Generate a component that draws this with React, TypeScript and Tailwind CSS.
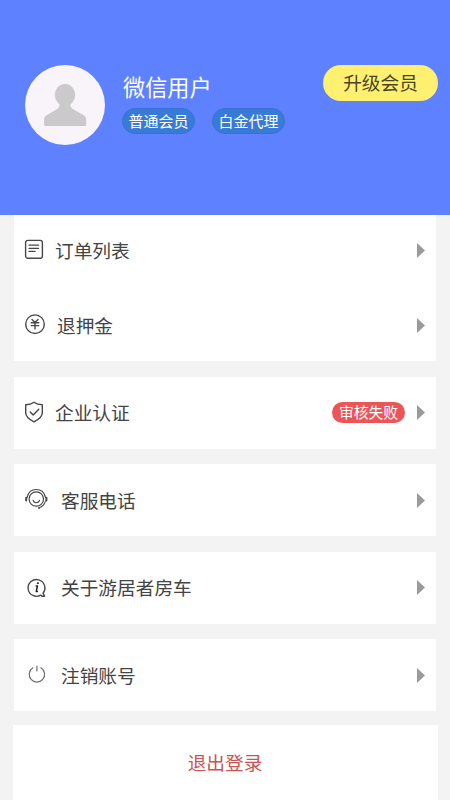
import type { ReactNode } from "react";

type MenuItem = {
  label: string;
  icon: ReactNode;
  iconWidth: string;
  badge?: string;
};

// every icon is drawn on a 24px high strip, starting at the row's left padding
const Icon = ({ children }: { children: ReactNode }) => (
  <svg
    width="26"
    height="24"
    viewBox="0 0 26 24"
    fill="none"
    stroke="#484848"
    strokeWidth="1.4"
    strokeLinecap="round"
    strokeLinejoin="round"
  >
    {children}
  </svg>
);

const OrderIcon = () => (
  <Icon>
    <rect x="1.6" y="1.4" width="16.8" height="17.8" rx="2.2" />
    <path d="M5 6.2h9.6M5 9.3h9.6M5 12.4h6" strokeWidth="1.3" />
  </Icon>
);

const DepositIcon = () => (
  <Icon>
    <circle cx="11" cy="11.2" r="9.3" />
    <path d="M8 6.4l3 3.2 3-3.2M7.2 9.8h7.6M7.2 12.6h7.6M11 9.8v6.2" />
  </Icon>
);

const ShieldIcon = () => (
  <Icon>
    <path d="M10 1.2c2.2 1.6 5 2.4 8.3 2.6V12c0 4.2-4.2 6.8-8.3 8.9-4.1-2.1-8.3-4.7-8.3-8.9V3.8C5 3.6 7.8 2.8 10 1.2z" />
    <path d="M6.2 11.1l3 3 5.6-5.8" />
  </Icon>
);

const ServiceIcon = () => (
  <Icon>
    <circle cx="12.3" cy="11" r="7.2" strokeWidth="1.2" />
    <path d="M3.2 9.4C4.2 4.2 7.7 1.5 12.3 1.5s8.1 2.7 9.1 7.9" strokeWidth="1.2" />
    <path d="M21.4 13.2c-.9 3.4-2.9 5.4-5.7 6.3" strokeWidth="1.1" />
    <path d="M2.2 9.8v2.8M22.4 9.8v2.8" strokeWidth="2" />
    <path d="M9 12.2c.5 1.7 1.7 2.5 3.3 2.5s2.8-.8 3.3-2.5" strokeWidth="1.1" />
    <circle cx="15" cy="20" r=".7" fill="#484848" strokeWidth=".6" />
  </Icon>
);

const AboutIcon = () => (
  <Icon>
    <path d="M16.8 19.1A8.4 8.4 0 1 1 19 17.2L20.6 20.2H18z" strokeWidth="1.4" />
    <path d="M12.2 10h1.2l-1.1 5.4h1.1" strokeWidth="1.5" stroke="#222" />
    <circle cx="13.8" cy="7.2" r=".7" fill="#222" stroke="#222" strokeWidth=".6" />
  </Icon>
);

const PowerIcon = () => (
  <Icon>
    <path d="M8.9 4.8a7.7 7.7 0 1 0 8 0M12.9 3v5" strokeWidth="1.2" stroke="#707070" />
  </Icon>
);

const groups: MenuItem[][] = [
  [
    { label: "订单列表", icon: <OrderIcon />, iconWidth: "w-[31px]" },
    { label: "退押金", icon: <DepositIcon />, iconWidth: "w-[33px]" },
  ],
  [{ label: "企业认证", icon: <ShieldIcon />, iconWidth: "w-[31px]", badge: "审核失败" }],
  [{ label: "客服电话", icon: <ServiceIcon />, iconWidth: "w-[37px]" }],
  [{ label: "关于游居者房车", icon: <AboutIcon />, iconWidth: "w-[37px]" }],
  [{ label: "注销账号", icon: <PowerIcon />, iconWidth: "w-[37px]" }],
];

const MenuRow = ({ item }: { item: MenuItem }) => (
  <button className="flex h-[72px] w-full items-center pl-[10px] pr-[11px] text-left first:not-last:h-[71px]">
    <span className={`shrink-0 ${item.iconWidth}`}>{item.icon}</span>
    <span className="flex-1 pb-px text-[18.7px] leading-6 text-[#444]">{item.label}</span>
    {item.badge && (
      <span className="mr-3 flex h-[21px] w-[73px] items-center justify-center rounded-full bg-[#eb5557] text-[14.8px] leading-none text-white">
        {item.badge}
      </span>
    )}
    <svg width="8" height="15" viewBox="0 0 8 15" fill="#999b9b">
      <path d="M0 0l8 7.5L0 15z" />
    </svg>
  </button>
);

const Tag = ({ children }: { children: ReactNode }) => (
  <span className="flex h-[26px] w-[73px] items-center justify-center rounded-full border border-[#3c6fd6] bg-[#387bd6] pb-[2px] text-[15px] leading-none text-white">
    {children}
  </span>
);

export default function App() {
  return (
    <div className="flex h-[800px] w-[450px] flex-col overflow-hidden bg-[#f3f3f3] font-['Noto_Sans_CJK_SC',sans-serif]">
      <header className="flex h-[215px] shrink-0 items-start bg-[#5e82ff] pl-[25px] pr-3 pt-[65px]">
        <div className="size-20 shrink-0 overflow-hidden rounded-full bg-[#f9f4fa]">
          <svg width="80" height="80" viewBox="0 0 80 80" fill="#cbc9cb">
            <ellipse cx="40" cy="30" rx="10.2" ry="11" />
            <path d="M34.500 37h11v3.500c0 1.700 1 2.700 2.700 3.700l10.500 6c1.700 1 2.500 2.100 2.500 3.900v5.400c0 1-.5 1.500-1.500 1.500H20.600c-1 0-1.500-.5-1.500-1.500v-5.400c0-1.800.8-2.900 2.500-3.900l10.200-6c1.700-1 2.700-2 2.700-3.700z" />
          </svg>
        </div>
        <div className="ml-[17px] flex-1 pt-[6px]">
          <h1 className="pl-px text-[22.2px] leading-[30px] text-white">微信用户</h1>
          <div className="mt-[7px] flex gap-[17px]">
            <Tag>普通会员</Tag>
            <Tag>白金代理</Tag>
          </div>
        </div>
        <button className="flex h-9 w-[115px] items-center justify-center rounded-full bg-[#fff070] pb-px text-[18.7px] leading-none text-[#494522]">
          升级会员
        </button>
      </header>

      <main className="flex flex-col gap-[15.5px] px-[14px]">
        {groups.map((items) => (
          <section
            key={items[0].label}
            className={`flex flex-col justify-between bg-white ${items.length > 1 ? "h-[146px]" : "h-[72px]"}`}
          >
            {items.map((item) => (
              <MenuRow key={item.label} item={item} />
            ))}
          </section>
        ))}
      </main>

      <button className="mx-[12.5px] mt-[14px] flex flex-1 items-center justify-center bg-white pb-px text-[18.7px] text-[#c95455]">
        退出登录
      </button>
    </div>
  );
}
